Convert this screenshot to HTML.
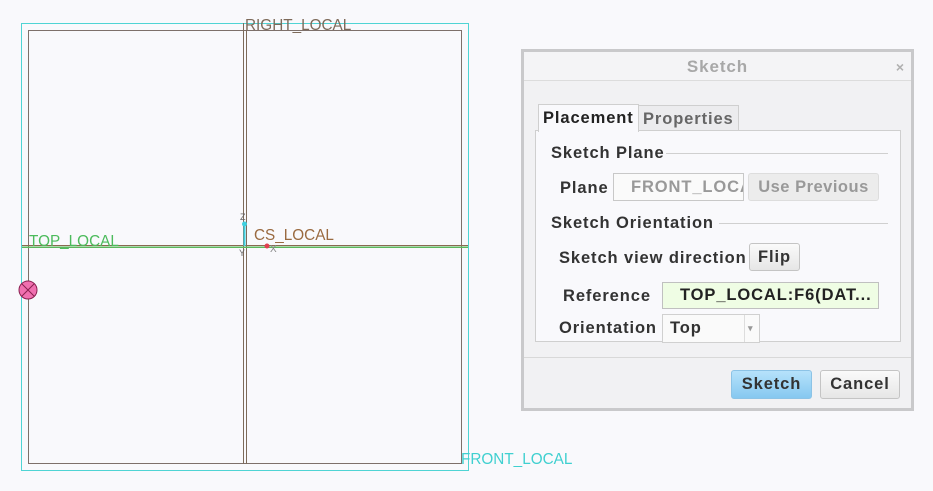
<!DOCTYPE html>
<html><head><meta charset="utf-8"><style>
html,body{margin:0;padding:0;width:933px;height:491px;background:#f9f9fc;overflow:hidden;font-family:"Liberation Sans",sans-serif}
.dlg{position:absolute;left:521px;top:49px;width:387px;height:356px;border:3px solid #c9c9cb;background:#f1f1f3;letter-spacing:0.9px}
.title{position:absolute;left:0;top:0;width:387px;height:28px;border-bottom:1px solid #dcdcdc;background:#f4f4f6;text-align:center;font-weight:bold;color:#a8a8a8;font-size:17px;line-height:30px}
.x{position:absolute;right:6px;top:0;color:#b0b0b0;font-size:14px}
.b{font-weight:bold;font-size:16.5px;color:#333;position:absolute;white-space:nowrap}
.tab{position:absolute;top:52px;height:26px;border:1px solid #cfcfcf;border-bottom:none;font-weight:bold;font-size:16.5px;line-height:26px;padding:0 4px}
.panel{position:absolute;left:11px;top:78px;width:364px;height:210px;border:1px solid #cfcfcf;background:#f9f9fc}
.line{position:absolute;height:1px;background:#d0d0d0}
.btn{position:absolute;border:1px solid #c4c4c4;border-radius:3px;background:linear-gradient(#fafafa,#e6e6e6);font-weight:bold;font-size:16.5px;text-align:center;color:#333}
</style></head><body>
<svg width="933" height="491" style="position:absolute;left:0;top:0" shape-rendering="crispEdges">
<rect x="21.5" y="23.5" width="447" height="447" fill="none" stroke="#4fd4d4" stroke-width="1"/>
<rect x="28.5" y="30.5" width="433" height="433" fill="none" stroke="#7d706a" stroke-width="1"/>
<line x1="243.5" y1="23" x2="243.5" y2="464" stroke="#7d6a5a"/>
<line x1="246.5" y1="30" x2="246.5" y2="464" stroke="#7d6a5a"/>
<line x1="22" y1="245.5" x2="468" y2="245.5" stroke="#8a6a50"/>
<line x1="22" y1="247" x2="468" y2="247" stroke="#5cb85c" stroke-width="1.5"/>
<line x1="244.5" y1="224" x2="244.5" y2="246" stroke="#40d0e0" stroke-width="2"/>
<circle cx="244.5" cy="224" r="2.5" fill="#40d0e0" shape-rendering="auto"/>
<circle cx="267" cy="246" r="2.5" fill="#e04050" shape-rendering="auto"/>
<text x="240" y="220" font-size="9" fill="#666">Z</text>
<text x="239" y="256" font-size="9" fill="#666">Y</text>
<text x="270" y="252" font-size="10" fill="#888">X</text>
<g shape-rendering="auto">
<circle cx="28" cy="290" r="9" fill="#f070b0" stroke="#8a2050"/>
<path d="M22 284L34 296M34 284L22 296" stroke="#8a2050"/>
</g>
<text x="245" y="30" font-size="15.3" fill="#7d6a5a" font-family="Liberation Sans">RIGHT_LOCAL</text>
<text x="29" y="246" font-size="15.3" fill="#4cbb5c" font-family="Liberation Sans">TOP_LOCAL</text>
<text x="254" y="240" font-size="15.3" fill="#9a6a40" font-family="Liberation Sans">CS_LOCAL</text>
<text x="461" y="464" font-size="15.3" fill="#40d0d0" font-family="Liberation Sans">FRONT_LOCAL</text>
</svg>
<div class="dlg">
<div class="title">Sketch<span class="x">×</span></div>
<div class="tab" style="left:14px;background:#f9f9fc;color:#222;border-color:#cfcfcf;z-index:2;height:27px">Placement</div>
<div class="tab" style="left:114px;top:53px;height:25px;color:#666;background:#ececee">Properties</div>
<div class="panel">
<div class="b" style="left:15px;top:13px">Sketch Plane</div>
<div class="line" style="left:130px;top:22px;width:222px"></div>
<div class="b" style="left:24px;top:48px">Plane</div>
<div style="position:absolute;left:77px;top:42px;width:129px;height:26px;border:1px solid #c8c8c8;background:#fafafa;color:#999;font-weight:bold;font-size:16.5px;line-height:26px;overflow:hidden;white-space:nowrap;text-indent:17px">FRONT_LOCAL</div>
<div class="btn" style="left:212px;top:42px;width:129px;height:26px;line-height:26px;color:#999;background:#ececec;border-color:#ddd;letter-spacing:0.5px">Use Previous</div>
<div class="b" style="left:15px;top:83px">Sketch Orientation</div>
<div class="line" style="left:183px;top:92px;width:169px"></div>
<div class="b" style="left:23px;top:118px">Sketch view direction</div>
<div class="btn" style="left:213px;top:112px;width:49px;height:26px;line-height:26px">Flip</div>
<div class="b" style="left:27px;top:156px">Reference</div>
<div style="position:absolute;left:126px;top:151px;width:215px;height:25px;border:1px solid #c0c0c0;background:#effde4;font-weight:bold;font-size:16.5px;line-height:25px;color:#222;text-indent:17px;overflow:hidden;white-space:nowrap">TOP_LOCAL:F6(DAT...</div>
<div class="b" style="left:23px;top:188px">Orientation</div>
<div style="position:absolute;left:126px;top:183px;width:96px;height:27px;border:1px solid #d0d0d0;background:#fafafa;font-weight:bold;font-size:16.5px;line-height:26px;color:#333;text-indent:7px">Top<span style="position:absolute;right:0;top:0;width:14px;height:27px;border-left:1px solid #ddd;color:#999;font-size:9px;text-indent:3px">▾</span></div>
</div>
<div class="line" style="left:0;top:305px;width:387px;background:#d8d8d8"></div>
<div class="btn" style="left:207px;top:318px;width:79px;height:27px;line-height:27px;background:linear-gradient(#b6e2fb,#86c8f0);border-color:#8cc3e6">Sketch</div>
<div class="btn" style="left:296px;top:318px;width:78px;height:27px;line-height:27px">Cancel</div>
</div>
</body></html>
